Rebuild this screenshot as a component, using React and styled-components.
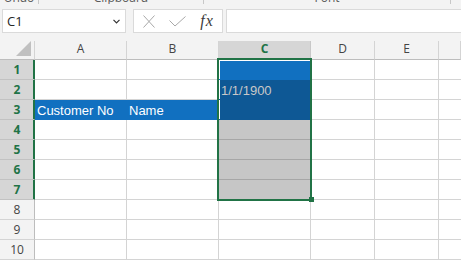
import React from 'react';
import styled, { createGlobalStyle } from 'styled-components';

const GlobalStyle = createGlobalStyle`
  html, body { margin: 0; padding: 0; background: #ffffff; }
  body { font-family: "Open Sans", "Noto Sans", sans-serif; }
`;

const Window = styled.div`
  width: 461px;
  height: 260px;
  overflow: hidden;
  background: #f3f3f3;
  display: flex;
  flex-direction: column;
`;

const RibbonEdge = styled.div`
  height: 4px;
  flex-shrink: 0;
  overflow: hidden;
  display: flex;
`;

const RibbonGroup = styled.div`
  width: ${(p) => p.$w}px;
  flex-shrink: 0;
  box-sizing: border-box;
  border-right: 1px solid #c8c8c8;
  display: flex;
  justify-content: center;
  align-items: flex-start;
`;

const RibbonLabel = styled.span`
  font-size: 12px;
  line-height: 12px;
  margin-top: -8px;
  color: #5a5a5a;
  white-space: nowrap;
`;

const FormulaBar = styled.div`
  height: 37px;
  flex-shrink: 0;
  box-sizing: border-box;
  padding-top: 5px;
  display: flex;
  align-items: flex-start;
`;

const Field = styled.div`
  height: 24px;
  box-sizing: border-box;
  background: #ffffff;
  border: 1px solid #dadada;
  display: flex;
  align-items: center;
`;

const NameBox = styled(Field)`
  margin-left: 2px;
  width: 124px;
  padding: 0 5px 0 4px;
  justify-content: space-between;
  font-size: 13px;
  color: #262626;
`;

const FormulaButtons = styled(Field)`
  margin-left: 7px;
  width: 90px;
`;

const IconSlot = styled.div`
  width: ${(p) => p.$w}px;
  height: 100%;
  display: flex;
  align-items: center;
  justify-content: center;
`;

const Fx = styled.span`
  font-family: "Liberation Serif", "DejaVu Serif", serif;
  font-style: italic;
  font-size: 16px;
  letter-spacing: 1px;
  color: #3c3c3c;
  line-height: 1;
`;

const FormulaInput = styled(Field)`
  margin-left: 3px;
  flex: 1;
  border-right: none;
`;

const Sheet = styled.div`
  position: relative;
  flex: 1;
  display: grid;
  grid-template-columns: 35px 92px 92px 92px 64px 64px 1fr;
  grid-template-rows: 19px repeat(10, 20px);
  background: #ffffff;
`;

const Corner = styled.div`
  position: relative;
  box-sizing: border-box;
  background: #f3f3f3;
  border-right: 1px solid #d4d4d4;
  border-bottom: 1px solid #bdbdbd;
`;

const CornerMark = styled.svg`
  position: absolute;
  right: 2px;
  top: 0;
`;

const ColHeader = styled.div`
  box-sizing: border-box;
  background: ${(p) => (p.$selected ? '#d6d6d6' : '#f3f3f3')};
  border-right: 1px solid ${(p) => (p.$selected ? '#c8c8c8' : '#d4d4d4')};
  border-bottom: 1px solid ${(p) => (p.$selected ? '#217346' : '#bdbdbd')};
  box-shadow: ${(p) => (p.$selected ? 'inset 0 -1px 0 #217346' : 'none')};
  display: flex;
  justify-content: center;
  align-items: flex-start;
  font-size: 12px;
  line-height: 16px;
  font-weight: ${(p) => (p.$selected ? 700 : 400)};
  color: ${(p) => (p.$selected ? '#217346' : '#444444')};
`;

const RowHeader = styled.div`
  box-sizing: border-box;
  background: ${(p) => (p.$selected ? '#d6d6d6' : '#f3f3f3')};
  border-right: 1px solid ${(p) => (p.$selected ? '#217346' : '#bdbdbd')};
  border-bottom: 1px solid ${(p) => (p.$selected ? '#c2c2c2' : '#d4d4d4')};
  box-shadow: ${(p) => (p.$selected ? 'inset -1px 0 0 #217346' : 'none')};
  display: flex;
  justify-content: center;
  align-items: flex-start;
  padding-top: 1px;
  font-size: 12px;
  line-height: 18px;
  font-weight: ${(p) => (p.$selected ? 700 : 400)};
  color: ${(p) => (p.$selected ? '#217346' : '#444444')};
`;

const fills = {
  none: { bg: '#ffffff', line: '#d4d4d4', color: '#000000', shadow: 'none' },
  blue: { bg: '#1170c0', line: '#1170c0', color: '#ffffff', shadow: 'none' },
  active: { bg: '#1170c0', line: '#1170c0', color: '#ffffff', shadow: 'inset 1px 1px 0 #ffffff' },
  dark: { bg: '#0e5895', line: '#0e5895', color: '#c8c8c8', shadow: 'inset 1px 0 0 #ffffff' },
  gray: { bg: '#c6c6c6', line: '#a6a6a6', color: '#000000', shadow: 'none' },
};

const Cell = styled.div`
  box-sizing: border-box;
  background: ${(p) => fills[p.$fill].bg};
  border-right: ${(p) => (p.$last ? 'none' : `1px solid ${p.$fill === 'blue' ? fills.blue.line : '#d4d4d4'}`)};
  border-bottom: 1px solid ${(p) => fills[p.$fill].line};
  box-shadow: ${(p) => fills[p.$fill].shadow};
  padding: 1px 2px 0 2px;
  font-family: "Liberation Sans", Arial, sans-serif;
  font-size: 13px;
  line-height: 19px;
  color: ${(p) => fills[p.$fill].color};
  white-space: nowrap;
`;

const Selection = styled.div`
  position: absolute;
  left: 217px;
  top: 17px;
  width: 95px;
  height: 143px;
  box-sizing: border-box;
  border: 2px solid #217346;
  pointer-events: none;
`;

const FillHandle = styled.div`
  position: absolute;
  left: 90px;
  top: 137px;
  width: 5px;
  height: 5px;
  background: #217346;
`;

const columns = ['A', 'B', 'C', 'D', 'E', ''];
const rows = [1, 2, 3, 4, 5, 6, 7, 8, 9, 10];

const cellData = {
  A3: { fill: 'blue', text: 'Customer No' },
  B3: { fill: 'blue', text: 'Name' },
  C1: { fill: 'active' },
  C2: { fill: 'dark', text: '1/1/1900' },
  C3: { fill: 'dark' },
  C4: { fill: 'gray' },
  C5: { fill: 'gray' },
  C6: { fill: 'gray' },
  C7: { fill: 'gray' },
};

const CloseIcon = () => (
  <svg width="12" height="13" viewBox="0 0 12 13">
    <path d="M0.5 0.5 L11.5 12.5 M11.5 0.5 L0.5 12.5" stroke="#a8a8a8" strokeWidth="1" fill="none" />
  </svg>
);

const CheckIcon = () => (
  <svg width="17" height="11" viewBox="0 0 17 11">
    <path d="M0.5 4.5 L6 10 L16.5 0.5" stroke="#a8a8a8" strokeWidth="1" fill="none" />
  </svg>
);

const Chevron = () => (
  <svg width="7" height="5" viewBox="0 0 7 5">
    <path d="M0.5 0.8 L3.5 3.8 L6.5 0.8" stroke="#333333" strokeWidth="1.2" fill="none" />
  </svg>
);

export default function App() {
  return (
    <>
      <GlobalStyle />
      <Window>
        <RibbonEdge>
          <RibbonGroup $w={39}><RibbonLabel>Undo</RibbonLabel></RibbonGroup>
          <RibbonGroup $w={165}><RibbonLabel>Clipboard</RibbonLabel></RibbonGroup>
          <RibbonGroup $w={247}><RibbonLabel>Font</RibbonLabel></RibbonGroup>
        </RibbonEdge>
        <FormulaBar>
          <NameBox>
            <span>C1</span>
            <Chevron />
          </NameBox>
          <FormulaButtons>
            <IconSlot $w={29}><CloseIcon /></IconSlot>
            <IconSlot $w={29}><CheckIcon /></IconSlot>
            <IconSlot $w={30}><Fx>fx</Fx></IconSlot>
          </FormulaButtons>
          <FormulaInput />
        </FormulaBar>
        <Sheet>
          <Corner>
            <CornerMark width="16" height="16" viewBox="0 0 16 16">
              <polygon points="0,15 15,0 15,15" fill="#c0c0c0" />
            </CornerMark>
          </Corner>
          {columns.map((c, i) => (
            <ColHeader key={'h' + i} $selected={c === 'C'}>{c}</ColHeader>
          ))}
          {rows.map((r) => (
            <React.Fragment key={r}>
              <RowHeader $selected={r <= 7}>{r}</RowHeader>
              {columns.map((c, i) => {
                const d = cellData[c + r] || { fill: 'none' };
                return (
                  <Cell key={c + r + i} $fill={d.fill} $last={i === columns.length - 1}>
                    {d.text}
                  </Cell>
                );
              })}
            </React.Fragment>
          ))}
          <Selection>
            <FillHandle />
          </Selection>
        </Sheet>
      </Window>
    </>
  );
}
